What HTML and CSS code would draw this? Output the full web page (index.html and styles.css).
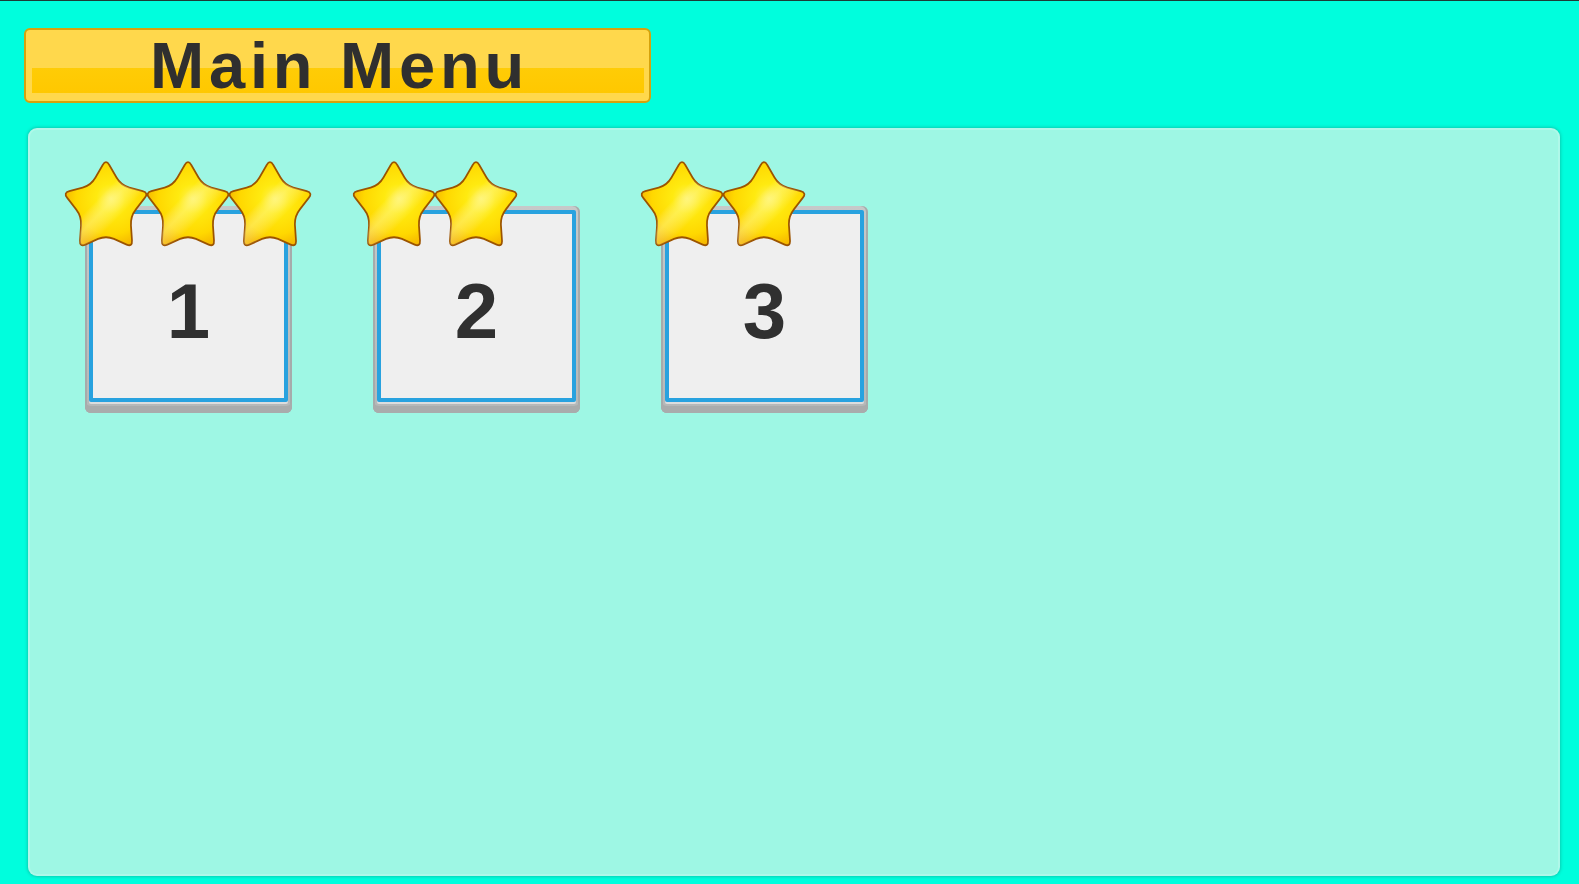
FILE: index.html
```html
<!DOCTYPE html>
<html lang="en">
<head>
<meta charset="utf-8">
<title>Main Menu</title>
<link rel="stylesheet" href="styles.css">
</head>
<body>
<svg class="defs" width="0" height="0" aria-hidden="true">
  <defs>
    <radialGradient id="starFill" cx="0.56" cy="0.44" r="0.6">
      <stop offset="0" stop-color="#fff25c"/>
      <stop offset="0.3" stop-color="#ffea10"/>
      <stop offset="0.72" stop-color="#ffd800"/>
      <stop offset="1" stop-color="#f4b400"/>
    </radialGradient>
    <linearGradient id="starGloss" x1="0" y1="0" x2="1" y2="1">
      <stop offset="0" stop-color="#ffffff" stop-opacity="0"/>
      <stop offset="0.42" stop-color="#ffffff" stop-opacity="0"/>
      <stop offset="0.52" stop-color="#fffbb0" stop-opacity="0.4"/>
      <stop offset="0.66" stop-color="#ffffff" stop-opacity="0"/>
    </linearGradient>
    <symbol id="star" viewBox="0 0 86 86" preserveAspectRatio="none">
      <path d="M 39.77 7.23 Q 43 2 46.23 7.23 L 53.28 18.65 Q 57.69 25.78 65.84 27.77 L 78.87 30.94 Q 84.85 32.4 80.87 37.09 L 72.20 47.33 Q 66.78 53.73 67.40 62.09 L 68.40 75.47 Q 68.86 81.6 63.17 79.27 L 50.76 74.18 Q 43 71 35.24 74.18 L 22.83 79.27 Q 17.14 81.6 17.60 75.47 L 18.60 62.09 Q 19.22 53.73 13.80 47.33 L 5.13 37.09 Q 1.15 32.4 7.13 30.94 L 20.16 27.77 Q 28.31 25.78 32.72 18.65 Z" fill="url(#starFill)" stroke="#9c5400" stroke-width="1.7" stroke-linejoin="round"/>
      <path d="M 39.77 7.23 Q 43 2 46.23 7.23 L 53.28 18.65 Q 57.69 25.78 65.84 27.77 L 78.87 30.94 Q 84.85 32.4 80.87 37.09 L 72.20 47.33 Q 66.78 53.73 67.40 62.09 L 68.40 75.47 Q 68.86 81.6 63.17 79.27 L 50.76 74.18 Q 43 71 35.24 74.18 L 22.83 79.27 Q 17.14 81.6 17.60 75.47 L 18.60 62.09 Q 19.22 53.73 13.80 47.33 L 5.13 37.09 Q 1.15 32.4 7.13 30.94 L 20.16 27.77 Q 28.31 25.78 32.72 18.65 Z" fill="url(#starGloss)"/>
    </symbol>
  </defs>
</svg>

<header class="title-bar">
  <h1 class="title">Main Menu</h1>
</header>

<main class="panel">
  <div class="levels">
    <div class="level">
      <div class="stars">
        <svg class="star"><use href="#star"/></svg>
        <svg class="star"><use href="#star"/></svg>
        <svg class="star"><use href="#star"/></svg>
      </div>
      <div class="card"><div class="card-face">1</div></div>
    </div>
    <div class="level">
      <div class="stars">
        <svg class="star"><use href="#star"/></svg>
        <svg class="star"><use href="#star"/></svg>
      </div>
      <div class="card"><div class="card-face">2</div></div>
    </div>
    <div class="level">
      <div class="stars">
        <svg class="star"><use href="#star"/></svg>
        <svg class="star"><use href="#star"/></svg>
      </div>
      <div class="card"><div class="card-face">3</div></div>
    </div>
  </div>
</main>
</body>
</html>
```

FILE: styles.css
```css
* { box-sizing: border-box; }

html, body {
  margin: 0;
  padding: 0;
}

body {
  width: 1579px;
  height: 884px;
  overflow: hidden;
  background: #00fedd;
  border-top: 1px solid #1d3a36;
  font-family: "Liberation Sans", Arial, sans-serif;
  display: flex;
  flex-direction: column;
  align-items: flex-start;
}

.defs {
  position: absolute;
  width: 0;
  height: 0;
}

.title-bar {
  margin: 27px 0 0 24px;
  width: 627px;
  height: 75px;
  border: 2px solid #d6a20c;
  border-radius: 6px;
  background:
    linear-gradient(#ffcc06, #ffc800) no-repeat 6px 38px / calc(100% - 11px) 25px,
    #ffd84c;
  display: flex;
  align-items: center;
  justify-content: center;
}

.title {
  margin: 0 0 0 4px;
  font-size: 65px;
  line-height: 1;
  font-weight: bold;
  letter-spacing: 4.8px;
  color: #2f2f2f;
}

.panel {
  margin: 25px 0 0 28px;
  width: 1532px;
  height: 748px;
  background: #9ef7e4;
  border-radius: 9px;
  box-shadow: 0 0 3px 1px rgba(20, 150, 130, 0.45), inset 0 0 0 2px rgba(255, 255, 255, 0.18);
  padding: 29px 0 0 57px;
}

.levels {
  display: flex;
  gap: 81px;
}

.level {
  position: relative;
  width: 207px;
  padding-top: 49px;
}

.stars {
  position: absolute;
  top: 0;
  left: -23px;
  display: flex;
  z-index: 2;
}

.star {
  width: 88px;
  height: 95px;
  margin-right: -6px;
}

.card {
  width: 207px;
  height: 207px;
  border-radius: 6px;
  background: linear-gradient(#c6c9c9, #b5b8b8);
  padding: 4px 4px 11px;
  box-shadow: inset 0 -7px 0 #a9acac, inset 2px 0 0 #a6abab, inset -2px 0 0 #a6abab;
}

.card-face {
  width: 100%;
  height: 100%;
  border: 4px solid #28a2df;
  border-radius: 2px;
  background: #efefef;
  display: flex;
  align-items: center;
  justify-content: center;
  padding-top: 10px;
  font-size: 78px;
  font-weight: bold;
  color: #303030;
  line-height: 1;
  box-shadow: 0 2px 0 #dcdddd;
}
```
